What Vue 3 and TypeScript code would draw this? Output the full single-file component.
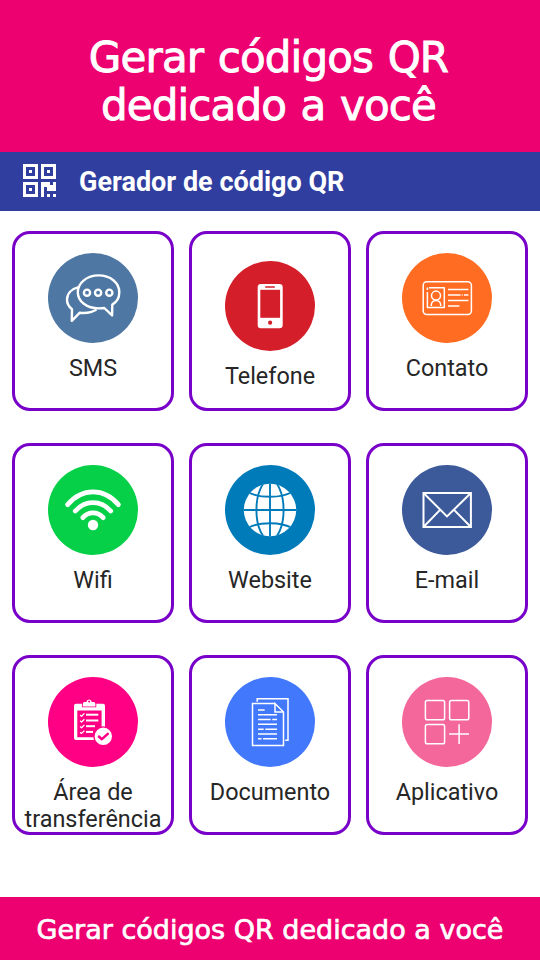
<script setup lang="ts">
interface Tile {
  id: string
  label: string
  color: string
  lowered?: boolean
}

const tiles: Tile[] = [
  { id: 'sms', label: 'SMS', color: '#4e78a3' },
  { id: 'phone', label: 'Telefone', color: '#d41f2a', lowered: true },
  { id: 'contact', label: 'Contato', color: '#ff6c22' },
  { id: 'wifi', label: 'Wifi', color: '#06cf48' },
  { id: 'website', label: 'Website', color: '#007bba' },
  { id: 'email', label: 'E-mail', color: '#3c5a9a' },
  { id: 'clipboard', label: 'Área de transferência', color: '#ff0084' },
  { id: 'document', label: 'Documento', color: '#4278fb' },
  { id: 'app', label: 'Aplicativo', color: '#f4679b' },
]

const checkRows = [37.7, 43.5, 49.2, 54.9]
const checkEnds = [50.3, 50.3, 47, 45]
</script>

<template>
  <div class="page">
    <header class="banner">
      <h1>Gerar códigos QR<br />dedicado a você</h1>
    </header>

    <div class="toolbar">
      <svg class="qr" viewBox="0 0 33 33" fill="#fff" shape-rendering="crispEdges">
        <path fill-rule="evenodd" d="M0 0h15v15H0zM3 3v9h9V3zM6 6h3v3H6z" />
        <path fill-rule="evenodd" d="M18 0h15v15H18zM21 3v9h9V3zM24 6h3v3h-3z" />
        <path fill-rule="evenodd" d="M0 18h15v15H0zM3 21v9h9v-9zM6 24h3v3H6z" />
        <path d="M18 18h9v3h3v-3h3v9h-9v-4h-3v10h-3zM24 30h3v3h-3zM30 30h3v3h-3z" />
      </svg>
      <span class="title">Gerador de código QR</span>
    </div>

    <main class="grid">
      <button v-for="t in tiles" :key="t.id" class="card" :class="{ lowered: t.lowered }">
        <svg class="icon" viewBox="0 0 90 90" fill="none" stroke="#fff" stroke-linejoin="round">
          <circle cx="45" cy="45" r="45" :fill="t.color" stroke="none" />

          <g v-if="t.id === 'sms'" stroke-width="2.4">
            <path d="M64.3 51.6C69 49 71.3 44.5 71.3 39.3C71.3 29.6 62.3 22.4 50.6 22.4S29.8 29.9 29.8 39.2S39 55.4 50.7 55.4C52.6 55.4 54.5 55.3 56.3 55L64.1 62.4Z" />
            <path d="M30.5 34.2C23 36 19 41 19 46.5C19 50.5 20.8 53.8 24 56.2L23.8 67.8L31.8 59.7C38 60.4 44 59.4 48.5 56.5" />
            <circle cx="39" cy="39.7" r="3.1" />
            <circle cx="50.1" cy="39.7" r="3.1" />
            <circle cx="61.3" cy="39.7" r="3.1" />
          </g>

          <g v-else-if="t.id === 'phone'" stroke="none">
            <rect x="32.7" y="23" width="25" height="44.3" rx="3.2" fill="#fff" />
            <rect x="35.3" y="28.8" width="19.8" height="28" :fill="t.color" />
            <rect x="40" y="25.2" width="10" height="1.6" rx=".8" :fill="t.color" />
            <circle cx="45.1" cy="61.7" r="2.1" :fill="t.color" />
          </g>

          <g v-else-if="t.id === 'contact'" stroke-width="1.5">
            <rect x="21.2" y="28.8" width="48.2" height="32.6" rx="3.6" />
            <path d="M25.4 39V54.5H42.3V34.7H27M25.4 34.5V37" />
            <circle cx="34" cy="42.6" r="4.5" />
            <path d="M29.3 53V52C29.3 49.4 31.2 47.4 34 47.4S38.7 49.4 38.7 52V53" />
            <path d="M46 36.6H66.4M46 42.1H58.6M59.8 42.1H60.8M62 42.1H66.4M46 47.6H66.4M46 53H57.4" />
          </g>

          <g v-else-if="t.id === 'wifi'" stroke-width="4.8" stroke-linecap="round">
            <path d="M19.6 39.6C34 22.5 56 22.5 70.4 39.6" />
            <path d="M27.3 46C37.3 34.8 52.7 34.8 62.7 46" />
            <path d="M34.8 52.6C40.2 46.2 49.8 46.2 55.2 52.6" />
            <circle cx="45" cy="60" r="5.2" fill="#fff" stroke="none" />
          </g>

          <g v-else-if="t.id === 'website'">
            <clipPath id="globe-disc"><circle cx="45" cy="45" r="26.3" /></clipPath>
            <circle cx="45" cy="45" r="26.2" fill="#fff" stroke="none" />
            <g :stroke="t.color" stroke-width="1.9" clip-path="url(#globe-disc)">
              <path d="M45 17V73M17 45H73" />
              <ellipse cx="45" cy="45" rx="13.6" ry="30" />
              <path d="M23 27C34 33.4 56 33.4 67 27M23 63C34 56.6 56 56.6 67 63" />
            </g>
          </g>

          <g v-else-if="t.id === 'email'" stroke-width="2" stroke-linejoin="miter">
            <rect x="21.5" y="28" width="47.4" height="34" />
            <path d="M21.5 28L45 51.4L68.9 28M21.5 62L38.3 44.6M68.9 62L51.8 44.6" />
          </g>

          <g v-else-if="t.id === 'clipboard'">
            <path
              fill="#fff"
              stroke="none"
              fill-rule="evenodd"
              d="M28 26.8H55A2 2 0 0 1 57 28.8V61A2 2 0 0 1 55 63H28A2 2 0 0 1 26 61V28.8A2 2 0 0 1 28 26.8ZM29.3 33.6V60.2H53.6V33.6Z"
            />
            <path
              d="M36.5 25H38.5C38.8 21.5 43.4 21.5 43.7 25H45.7Q47.4 25 47.4 27V29.4H34.8V27Q34.8 25 36.5 25Z"
              fill="#fff"
              :stroke="t.color"
              stroke-width="1.8"
              paint-order="stroke"
            />
            <circle cx="41.1" cy="24.4" r="1" :fill="t.color" stroke="none" />
            <g v-for="(y, i) in checkRows" :key="y">
              <path :d="`M32 ${y + 0.3}L33.6 ${y + 1.5}L36.4 ${y - 1.3}`" stroke-width="1.3" />
              <path :d="`M38 ${y}H${checkEnds[i]}`" stroke-width="2" />
            </g>
            <circle cx="55.3" cy="59.3" r="9.4" fill="#fff" :stroke="t.color" stroke-width="1.4" />
            <path d="M50.9 59.5L53.9 62.2L59.8 56.8" :stroke="t.color" stroke-width="2.5" stroke-linecap="round" />
          </g>

          <g v-else-if="t.id === 'document'" stroke-width="1.5" stroke-linejoin="miter">
            <path d="M50 26.5H27.5V68.5H58.5V35L50 26.5V35H58.5" />
            <path d="M32.2 24.8V21.7H63V63.3H60.2" />
            <path d="M33 33H39.7M33 37.7H52M33 42.6H45.7M47.2 42.6H52M33 47.3H52M33 52.2H38.7M40.3 52.2H52M33 56.9H52M33 61.7H36.5M38 61.7H52" />
          </g>

          <g v-else stroke-width="1.5">
            <rect x="23.4" y="23.6" width="19.2" height="19.2" rx="1.8" />
            <rect x="47.6" y="23.6" width="19.2" height="19.2" rx="1.8" />
            <rect x="23.4" y="47.6" width="19.2" height="19.2" rx="1.8" />
            <path d="M57.1 47.2V67M47.1 56.9H67" />
          </g>
        </svg>
        <span class="label">{{ t.label }}</span>
      </button>
    </main>

    <footer class="footer">Gerar códigos QR dedicado a você</footer>
  </div>
</template>

<style>
body {
  margin: 0;
  background: #fff;
}
</style>

<style scoped>
.page {
  display: flex;
  flex-direction: column;
  width: 540px;
  height: 960px;
  overflow: hidden;
  background: #fff;
}
.banner {
  height: 152px;
  box-sizing: border-box;
  padding: 34px 3px 0 0;
  background: #ed006f;
  color: #fff;
  text-align: center;
}
h1 {
  margin: 0;
  font: 400 42px/48px 'DejaVu Sans', sans-serif;
  letter-spacing: -0.85px;
  word-spacing: 2px;
  -webkit-text-stroke: 0.9px #fff;
}
.toolbar {
  display: flex;
  align-items: center;
  gap: 23px;
  height: 59px;
  padding-left: 23px;
  background: #303e9f;
}
.qr {
  width: 33px;
  height: 33px;
  margin-bottom: 2px;
}
.title {
  color: #fff;
  font: 700 27px/32px Roboto, sans-serif;
}
.grid {
  flex: 1;
  display: grid;
  grid-template-columns: repeat(3, 162px);
  grid-auto-rows: 180px;
  column-gap: 15px;
  row-gap: 32px;
  padding: 20px 12px 0;
}
.card {
  display: flex;
  flex-direction: column;
  align-items: center;
  gap: 12px;
  box-sizing: border-box;
  margin: 0;
  padding: 19px 0 0;
  border: 3px solid #7800c8;
  border-radius: 18px;
  background: #fff;
}
.card.lowered {
  padding-top: 27px;
}
.icon {
  flex: none;
  width: 90px;
  height: 90px;
}
.label {
  color: #262626;
  font: 400 23.4px/27px Roboto, sans-serif;
  text-align: center;
}
.footer {
  height: 63px;
  background: #ed006f;
  color: #fff;
  text-align: center;
  font: 400 27px/66px 'DejaVu Sans', sans-serif;
  -webkit-text-stroke: 0.7px #fff;
}
</style>
